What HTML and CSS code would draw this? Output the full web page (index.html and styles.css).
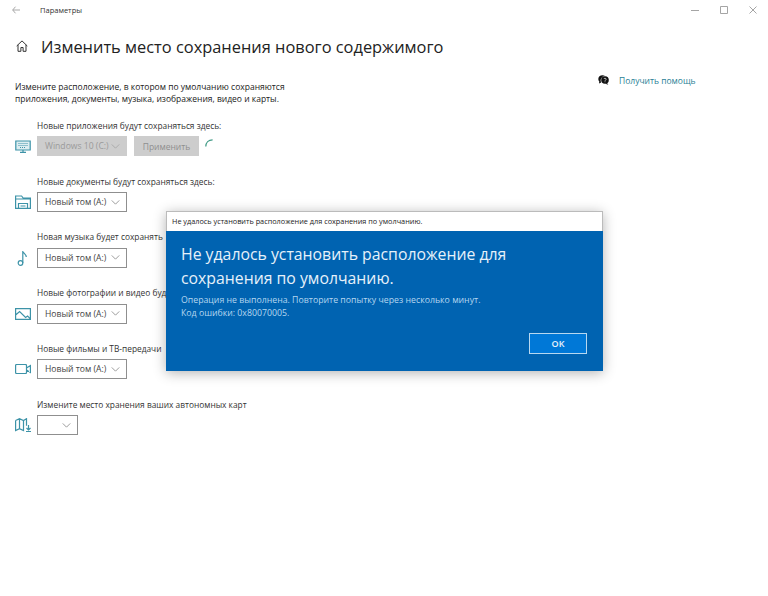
FILE: index.html
```html
<!DOCTYPE html>
<html lang="ru">
<head>
<meta charset="utf-8">
<title>Параметры</title>
<link rel="stylesheet" href="styles.css">
</head>
<body>
<div class="window">
  <header class="titlebar">
    <svg class="back" viewBox="0 0 8 8" width="8" height="8"><path d="M3.500.7.700 4l2.800 3.300M.7 4H8" fill="none" stroke="#a8a8a8"/></svg>
    <span class="app-name">Параметры</span>
    <div class="controls">
      <svg viewBox="0 0 8 8" width="8" height="8"><path d="M0 4.500H8" stroke="#a5a5a5"/></svg>
      <svg viewBox="0 0 8 8" width="8" height="8"><path d="M.5.5h7v7h-7z" fill="none" stroke="#a5a5a5"/></svg>
      <svg viewBox="0 0 8 8" width="8" height="8"><path d="M.5.500l7 7M7.500.5l-7 7" fill="none" stroke="#a5a5a5"/></svg>
    </div>
  </header>

  <div class="heading">
    <svg class="home" viewBox="0 0 12 12" width="12" height="12"><path d="M.7 6 6 .9 11.300 6M2 4.900V11.300h2.900V7.500h2.200v3.800H10V4.900" fill="none" stroke="#333" stroke-width="1"/></svg>
    <h1>Изменить место сохранения нового содержимого</h1>
  </div>

  <div class="columns">
    <main class="settings">
      <p class="intro">Измените расположение, в котором по умолчанию сохраняются<br>приложения, документы, музыка, изображения, видео и карты.</p>

      <section class="group">
        <div class="label">Новые приложения будут сохраняться здесь:</div>
        <div class="row">
          <svg class="icon" viewBox="0 0 16 14" width="16" height="14"><path d="M.8 2h14.400v9H.8z" fill="#dcedf1" stroke="#3d93a8" stroke-width="1.200"/><path d="M8 11v2M5 13.300h6" fill="none" stroke="#3d93a8" stroke-width="1.200"/><path d="M3.500 4.500h9M3.500 6.500h9M5 8.500h6" stroke="#3d93a8" stroke-dasharray="1 1"/></svg>
          <div class="select disabled select-wide"><span>Windows 10 (C:)</span><svg class="chev" viewBox="0 0 10 6" width="9" height="5"><path d="M.5.500 5 5 9.500.5" fill="none" stroke="currentColor"/></svg></div>
          <div class="apply">Применить</div>
          <svg class="spinner" viewBox="0 0 10 10" width="8" height="8"><path d="M1 9.500C1 4.500 4.500 1 9.500 1" fill="none" stroke="#3f9a85" stroke-width="1.500"/></svg>
        </div>
      </section>

      <section class="group">
        <div class="label">Новые документы будут сохраняться здесь:</div>
        <div class="row">
          <svg class="icon" viewBox="0 0 16 14" width="16" height="14"><path d="M.6 1h6l1.500 2h7.300v10.400H.6zM.6 4h14.800M3.500 13.400V8.500h9v4.900M5.500 11h5" fill="none" stroke="#3d93a8" stroke-width="1.200"/></svg>
          <div class="select select-wide"><span>Новый том (A:)</span><svg class="chev" viewBox="0 0 10 6" width="9" height="5"><path d="M.5.500 5 5 9.500.5" fill="none" stroke="currentColor"/></svg></div>
        </div>
      </section>

      <section class="group">
        <div class="label">Новая музыка будет сохранять</div>
        <div class="row">
          <svg class="icon" viewBox="0 0 16 16" width="16" height="16"><circle cx="5.500" cy="13" r="2.300" fill="none" stroke="#3d93a8" stroke-width="1.200"/><path d="M7.800 13V1c.4 2.500 3.500 3 3.500 6" fill="none" stroke="#3d93a8" stroke-width="1.200"/></svg>
          <div class="select select-wide"><span>Новый том (A:)</span><svg class="chev" viewBox="0 0 10 6" width="9" height="5"><path d="M.5.500 5 5 9.500.5" fill="none" stroke="currentColor"/></svg></div>
        </div>
      </section>

      <section class="group">
        <div class="label">Новые фотографии и видео буд</div>
        <div class="row">
          <svg class="icon" viewBox="0 0 16 12" width="16" height="12"><path d="M.6.600h14.800v10.800H.6zM.6 7l4-3.500 6 6 2-1.500 2.800 2.800" fill="none" stroke="#3d93a8" stroke-width="1.200"/></svg>
          <div class="select select-wide"><span>Новый том (A:)</span><svg class="chev" viewBox="0 0 10 6" width="9" height="5"><path d="M.5.500 5 5 9.500.5" fill="none" stroke="currentColor"/></svg></div>
        </div>
      </section>

      <section class="group">
        <div class="label">Новые фильмы и ТВ-передачи</div>
        <div class="row">
          <svg class="icon" viewBox="0 0 16 10" width="16" height="10"><path d="M.6 1.500a1 1 0 0 1 1-1h8.900a1 1 0 0 1 1 1v7a1 1 0 0 1-1 1H1.600a1 1 0 0 1-1-1zM11.500 4l3.900-2.500v7l-3.900-2.500" fill="none" stroke="#3d93a8" stroke-width="1.200"/></svg>
          <div class="select select-wide"><span>Новый том (A:)</span><svg class="chev" viewBox="0 0 10 6" width="9" height="5"><path d="M.5.500 5 5 9.500.5" fill="none" stroke="currentColor"/></svg></div>
        </div>
      </section>

      <section class="group">
        <div class="label">Измените место хранения ваших автономных карт</div>
        <div class="row">
          <svg class="icon" viewBox="0 0 16 14" width="16" height="14"><path d="M.6 2.500 4.500.7l4 1.800 3-1.800v7M.6 2.500v10l3.900-1.800 4 1.800V2.500M4.500.7v10M13.500 7v5M11.500 10l2 2 2-2M11 13.500h5" fill="none" stroke="#3d93a8" stroke-width="1.200"/></svg>
          <div class="select select-narrow"><svg class="chev" viewBox="0 0 10 6" width="9" height="5"><path d="M.5.500 5 5 9.500.5" fill="none" stroke="currentColor"/></svg></div>
        </div>
      </section>
    </main>

    <aside class="help">
      <svg class="help-icon" viewBox="0 0 11 10" width="11" height="10"><path d="M4.500.3C2 .3.300 2 .3 4c0 1 .4 1.900 1 2.500L1 8.500l2.200-1A4.500 4.500 0 0 1 7 .9 5 5 0 0 0 4.500.3z" fill="#111"/><circle cx="7" cy="5" r="3.800" fill="#111"/><path d="M9 8l1.300 1.800-3-1z" fill="#111"/><path d="M5.800 4c.2-1 2.400-1 2.400.2 0 .8-1.200.8-1.200 1.600M7 6.400v.8" fill="none" stroke="#fff" stroke-width=".7"/></svg>
      <a class="help-link">Получить помощь</a>
    </aside>
  </div>

  <div class="dialog">
    <div class="dialog-title">Не удалось установить расположение для сохранения по умолчанию.</div>
    <div class="dialog-body">
      <h2>Не удалось установить расположение для сохранения по умолчанию.</h2>
      <p>Операция не выполнена. Повторите попытку через несколько минут.<br>Код ошибки: 0x80070005.</p>
      <div class="dialog-actions"><div class="ok">OK</div></div>
    </div>
  </div>
</div>
</body>
</html>
```

FILE: styles.css
```css
* { box-sizing: border-box; }
html, body { margin: 0; padding: 0; }
body {
  width: 768px;
  height: 596px;
  overflow: hidden;
  background: #fff;
  font-family: "Open Sans", "Noto Sans", sans-serif;
  color: #333;
}
.window { position: relative; width: 768px; height: 596px; }

.titlebar {
  display: flex;
  align-items: center;
  height: 20px;
  padding-left: 12px;
}
.back { margin-right: 20px; }
.app-name { font-size: 7.500px; color: #333; }
.controls {
  display: flex;
  gap: 21px;
  margin-left: auto;
  margin-right: 11px;
}

.heading {
  display: flex;
  align-items: center;
  height: 26px;
  margin-top: 13px;
  padding-left: 16px;
}
.home { margin-right: 13px; }
h1 {
  margin: 0;
  font-size: 16.400px;
  font-weight: 400;
  color: #222;
  white-space: nowrap;
}

.columns { display: flex; }
.settings { width: 584px; padding-left: 15px; }
.intro {
  margin: 22px 0 0;
  font-size: 8.500px;
  line-height: 12px;
  color: #222;
  white-space: nowrap;
}
.group { margin-top: 14.800px; height: 41px; }
.label {
  height: 12px;
  margin-left: 22px;
  font-size: 8.350px;
  line-height: 12px;
  color: #333;
  white-space: nowrap;
}
.row {
  display: flex;
  align-items: center;
  height: 21px;
  margin-top: 4px;
}
.icon { flex: none; width: 16px; margin-right: 6px; }

.select {
  display: flex;
  align-items: center;
  justify-content: space-between;
  height: 20px;
  padding: 0 6px 0 7px;
  border: 1.500px solid #8f8f8f;
  background: #fff;
  font-size: 8.600px;
  color: #444;
}
.select-wide { width: 90px; }
.select-narrow { width: 41px; justify-content: flex-end; }
.chev { color: #888; flex: none; }
.select.disabled { background: #cdcdcd; border-color: #cdcdcd; color: #9a9a9a; }
.select.disabled .chev { color: #a5a5a5; }
.apply {
  display: flex;
  align-items: center;
  justify-content: center;
  width: 65px;
  height: 20px;
  margin-left: 7px;
  background: #cdcdcd;
  font-size: 8.500px;
  color: #8f8f8f;
}
.spinner { margin: -6px 0 0 6px; }

.help { display: flex; align-items: center; height: 14px; margin-top: 14px; padding-left: 14px; }
.help-icon { margin-right: 10px; }
.help-link { font-size: 8.500px; color: #2a7f96; white-space: nowrap; }

.dialog {
  position: absolute;
  left: 166px;
  top: 211px;
  width: 437px;
  height: 160px;
  box-shadow: 0 2px 12px rgba(0, 0, 0, .3);
}
.dialog-title {
  height: 20px;
  padding-left: 5px;
  background: #fff;
  border: 1px solid #bbb;
  border-bottom: 0;
  font-size: 7.300px;
  line-height: 18px;
  color: #222;
  white-space: nowrap;
}
.dialog-body {
  height: 140px;
  padding: 12px 16px 0 15px;
  background: #0063b1;
  color: #fff;
}
h2 {
  width: 360px;
  margin: 0;
  font-size: 15.800px;
  font-weight: 400;
  line-height: 23.500px;
  color: #e6f1fa;
}
.dialog-body p {
  margin: 4px 0 0;
  font-size: 8.750px;
  line-height: 13px;
  color: #b5d6f0;
  white-space: nowrap;
}
.dialog-actions { display: flex; justify-content: flex-end; margin-top: 13px; }
.ok {
  display: flex;
  align-items: center;
  justify-content: center;
  width: 58px;
  height: 21px;
  border: 1.500px solid #b8d8f0;
  background: #0078d7;
  font-size: 9px;
  font-weight: 600;
  color: #e6f1fa;
}
```
